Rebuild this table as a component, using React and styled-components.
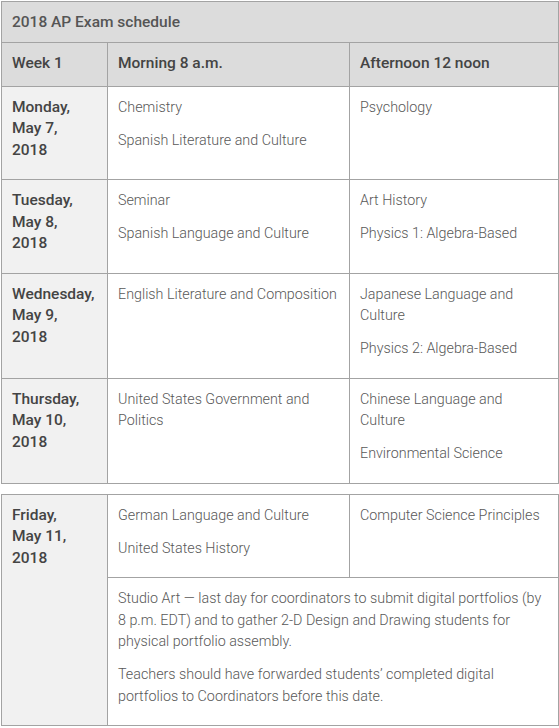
import React from "react";
import styled, { createGlobalStyle } from "styled-components";

const Global = createGlobalStyle`
  html, body { margin: 0; padding: 0; background: #fff; }
  body { font-family: Roboto, "Liberation Sans", Arial, sans-serif; }
`;

const Page = styled.div`
  padding: 1px 1px 0 1px;
  display: flex;
  flex-direction: column;
  gap: 10px;
`;

const Table = styled.table`
  width: 557px;
  border-collapse: collapse;
  table-layout: fixed;
  font-size: 14.3px;
  line-height: 21.5px;
`;

const Cell = styled.td`
  border: 1px solid #a3a3a3;
  padding: 10px 10px 6.5px 10px;
  vertical-align: top;
  background: ${(p) => (p.$date ? "#f1f1f1" : "#fff")};
  color: ${(p) => (p.$date ? "#444" : "#585858")};
  font-weight: ${(p) => (p.$date ? 500 : 300)};
  font-size: ${(p) => (p.$date ? "15.5px" : "14.3px")};
`;

const HeadCell = styled.th`
  border: 1px solid #a3a3a3;
  padding: ${(p) => (p.$title ? "10px" : "10px 10px 11px 10px")};
  text-align: left;
  vertical-align: middle;
  background: #dcdcdc;
  color: #444;
  font-weight: 500;
  font-size: 15.5px;
  line-height: ${(p) => (p.$title ? "20px" : "21.5px")};
`;

const Para = styled.p`
  margin: 0 0 11.5px 0;
`;

const TitleText = styled.span`
  color: #555;
  font-weight: 500;
`;

const Cols = () => (
  <colgroup>
    <col style={{ width: "106px" }} />
    <col style={{ width: "242px" }} />
    <col style={{ width: "209px" }} />
  </colgroup>
);

const rows = [
  {
    date: ["Monday,", "May 7,", "2018"],
    am: ["Chemistry", "Spanish Literature and Culture"],
    pm: ["Psychology"],
  },
  {
    date: ["Tuesday,", "May 8,", "2018"],
    am: ["Seminar", "Spanish Language and Culture"],
    pm: ["Art History", "Physics 1: Algebra-Based"],
  },
  {
    date: ["Wednesday,", "May 9,", "2018"],
    am: ["English Literature and Composition"],
    pm: ["Japanese Language and Culture", "Physics 2: Algebra-Based"],
  },
  {
    date: ["Thursday,", "May 10,", "2018"],
    am: ["United States Government and Politics"],
    pm: ["Chinese Language and Culture", "Environmental Science"],
  },
];

const DateLines = ({ lines }) => (
  <Para>
    {lines.map((l, i) => (
      <React.Fragment key={i}>
        {l}
        {i < lines.length - 1 && <br />}
      </React.Fragment>
    ))}
  </Para>
);

export default function App() {
  return (
    <>
      <Global />
      <Page>
        <Table>
          <Cols />
          <thead>
            <tr>
              <HeadCell colSpan={3} $title>
                <TitleText>2018 AP Exam schedule</TitleText>
              </HeadCell>
            </tr>
            <tr>
              <HeadCell>Week 1</HeadCell>
              <HeadCell>Morning 8 a.m.</HeadCell>
              <HeadCell>Afternoon 12 noon</HeadCell>
            </tr>
          </thead>
          <tbody>
            {rows.map((r, i) => (
              <tr key={i}>
                <Cell $date>
                  <DateLines lines={r.date} />
                </Cell>
                <Cell>
                  {r.am.map((t) => (
                    <Para key={t}>{t}</Para>
                  ))}
                </Cell>
                <Cell>
                  {r.pm.map((t) => (
                    <Para key={t}>{t}</Para>
                  ))}
                </Cell>
              </tr>
            ))}
          </tbody>
        </Table>
        <Table>
          <Cols />
          <tbody>
            <tr>
              <Cell $date rowSpan={2}>
                <DateLines lines={["Friday,", "May 11,", "2018"]} />
              </Cell>
              <Cell>
                <Para>German Language and Culture</Para>
                <Para>United States History</Para>
              </Cell>
              <Cell>
                <Para>Computer Science Principles</Para>
              </Cell>
            </tr>
            <tr>
              <Cell colSpan={2}>
                <Para>
                  Studio Art — last day for coordinators to submit digital
                  portfolios (by 8 p.m. EDT) and to gather 2-D Design and
                  Drawing students for physical portfolio assembly.
                </Para>
                <Para>
                  Teachers should have forwarded students’ completed digital
                  portfolios to Coordinators before this date.
                </Para>
              </Cell>
            </tr>
          </tbody>
        </Table>
      </Page>
    </>
  );
}
